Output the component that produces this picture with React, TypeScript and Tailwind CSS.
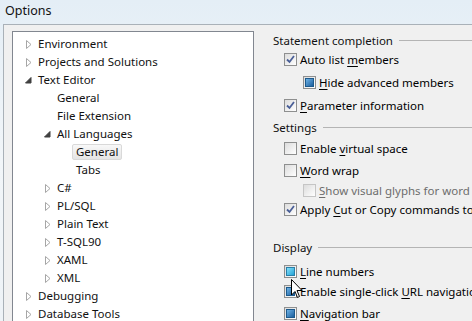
import React from 'react';

type TreeRow = {
  label: string;
  level: number;
  arrow?: 'closed' | 'open';
  selected?: boolean;
};

const treeRows: TreeRow[] = [
  { label: 'Environment', level: 0, arrow: 'closed' },
  { label: 'Projects and Solutions', level: 0, arrow: 'closed' },
  { label: 'Text Editor', level: 0, arrow: 'open' },
  { label: 'General', level: 1 },
  { label: 'File Extension', level: 1 },
  { label: 'All Languages', level: 1, arrow: 'open' },
  { label: 'General', level: 2, selected: true },
  { label: 'Tabs', level: 2 },
  { label: 'C#', level: 1, arrow: 'closed' },
  { label: 'PL/SQL', level: 1, arrow: 'closed' },
  { label: 'Plain Text', level: 1, arrow: 'closed' },
  { label: 'T-SQL90', level: 1, arrow: 'closed' },
  { label: 'XAML', level: 1, arrow: 'closed' },
  { label: 'XML', level: 1, arrow: 'closed' },
  { label: 'Debugging', level: 0, arrow: 'closed' },
  { label: 'Database Tools', level: 0, arrow: 'closed' },
];

function Arrow({ kind }: { kind?: 'closed' | 'open' }) {
  if (!kind) return <span className="w-[19px] shrink-0" />;
  return (
    <span className="w-[19px] shrink-0 flex items-center justify-center">
      {kind === 'closed' ? (
        <svg width="6" height="9" viewBox="0 0 6 9">
          <path d="M0.5 0.5 L5 4.5 L0.5 8.5 Z" fill="#fff" stroke="#a6a6a6" strokeWidth="1" />
        </svg>
      ) : (
        <svg width="7" height="7" viewBox="0 0 7 7">
          <path d="M6 0.5 L6 6 L0.5 6 Z" fill="#404040" stroke="#404040" strokeWidth="1" />
        </svg>
      )}
    </span>
  );
}

type BoxState = 'checked' | 'unchecked' | 'mixed' | 'mixedHot' | 'disabled';

function Box({ state }: { state: BoxState }) {
  const border = state === 'disabled' ? 'border-[#c5c5c5]' : 'border-[#8e8f8f]';
  return (
    <span
      className={`relative w-[13px] h-[13px] shrink-0 border ${border} bg-gradient-to-br from-[#dcdcdc] to-[#ffffff] flex items-center justify-center`}
    >
      {state === 'checked' && (
        <svg width="9" height="9" viewBox="0 0 9 9" className="absolute left-[1px] top-[1px]">
          <path d="M1 4.5 L3.5 7 L8 1" fill="none" stroke="#4a5f97" strokeWidth="1.8" />
        </svg>
      )}
      {state === 'mixed' && (
        <span className="w-[9px] h-[9px] border border-[#1d5a8c] bg-gradient-to-br from-[#6db3e6] to-[#1a5f9e]" />
      )}
      {state === 'mixedHot' && (
        <span className="w-[9px] h-[9px] border border-[#2a7fa8] bg-gradient-to-br from-[#7fe0fa] to-[#1da3d6]" />
      )}
    </span>
  );
}

function U({ children }: { children: React.ReactNode }) {
  return <span className="underline underline-offset-[2px]">{children}</span>;
}

function Check({
  state,
  indent = 0,
  mt,
  children,
}: {
  state: BoxState;
  indent?: number;
  mt: string;
  children: React.ReactNode;
}) {
  return (
    <div
      className={`h-[18px] flex items-center gap-[3px] whitespace-nowrap ${mt} ${indent ? 'pl-[49px]' : 'pl-[30px]'} ${
        state === 'disabled' ? 'text-[#6d6d6d]' : 'text-black'
      }`}
    >
      <Box state={state} />
      <span>{children}</span>
    </div>
  );
}

function Header({ label, mt }: { label: string; mt: string }) {
  return (
    <div className={`h-[18px] flex items-center pl-[19px] gap-[6px] ${mt}`}>
      <span className="whitespace-nowrap">{label}</span>
      <span className="flex-1 h-px bg-[#b4b4b4]" />
    </div>
  );
}

export default function App() {
  return (
    <div
      className="relative w-[472px] h-[321px] overflow-hidden bg-gradient-to-b from-[#e4eef6] via-[#f2f6f9] to-[#eef3f7] text-[11.5px] text-[#111]"
      style={{ fontFamily: '"Noto Sans", "Open Sans", sans-serif' }}
    >
      <div className="h-[24px] flex items-center pl-[5px] pb-[2px] text-[12.5px]">Options</div>
      <div className="ml-[3px] h-[297px] border-l border-t border-[#a9b1b8] bg-[#f0f0f0] flex">
        <div className="ml-[8px] mt-[6px] w-[242px] shrink-0 border border-[#828790] bg-white pt-[3px] h-[400px]">
          {treeRows.map((r, i) => (
            <div
              key={i}
              className="h-[18px] flex items-center whitespace-nowrap"
              style={{ paddingLeft: 6 + r.level * 19 }}
            >
              <Arrow kind={r.arrow} />
              {r.selected ? (
                <span className="-ml-[4px] h-[16px] px-[3px] flex items-center border border-[#d9d9d9] rounded-[2px] bg-gradient-to-b from-[#f8f8f8] to-[#e5e5e5]">
                  {r.label}
                </span>
              ) : (
                <span>{r.label}</span>
              )}
            </div>
          ))}
        </div>
        <div className="flex-1 flex flex-col min-w-0">
          <Header label="Statement completion" mt="mt-[7px]" />
          <Check state="checked" mt="mt-[2px]">
            Auto list <U>m</U>embers
          </Check>
          <Check state="mixed" indent={1} mt="mt-[5px]">
            <U>H</U>ide advanced members
          </Check>
          <Check state="checked" mt="mt-[6px]">
            <U>P</U>arameter information
          </Check>
          <Header label="Settings" mt="mt-[5px]" />
          <Check state="unchecked" mt="mt-[4px]">
            Enable <U>v</U>irtual space
          </Check>
          <Check state="unchecked" mt="mt-[4px]">
            <U>W</U>ord wrap
          </Check>
          <Check state="disabled" indent={1} mt="mt-[3px]">
            <U>S</U>how visual glyphs for word wrap
          </Check>
          <Check state="checked" mt="mt-[2px]">
            Apply <U>C</U>ut or Copy commands to blank lines
          </Check>
          <Header label="Display" mt="mt-[21px]" />
          <Check state="mixedHot" mt="mt-[6px]">
            <U>L</U>ine numbers
          </Check>
          <Check state="mixed" mt="mt-[3px]">
            Enable single-click <U>U</U>RL navigation
          </Check>
          <Check state="mixed" mt="mt-[5px]">
            <U>N</U>avigation bar
          </Check>
        </div>
      </div>
      <svg
        className="absolute left-[291px] top-[279px]"
        width="12"
        height="20"
        viewBox="0 0 12 20"
      >
        <path
          d="M0.5 0.5 L0.5 16 L4 12.5 L6.5 18.5 L8.5 17.5 L6 11.5 L11 11.5 Z"
          fill="#fff"
          stroke="#000"
          strokeWidth="1"
          strokeLinejoin="miter"
        />
      </svg>
    </div>
  );
}
